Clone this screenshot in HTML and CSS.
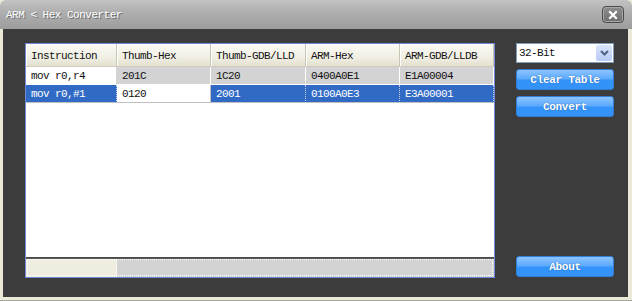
FILE: index.html
```html
<!DOCTYPE html>
<html lang="en">
<head>
    <meta charset="UTF-8">
    <title>ARM &lt; Hex Converter</title>
    <link rel="stylesheet" href="styles.css">
</head>
<body>
    <div class="window">
        <div class="titlebar">
            <span class="title">ARM &lt; Hex Converter</span>
            <button class="close-btn">
                <svg width="10" height="10" viewBox="0 0 10 10">
                    <path d="M2 2 L8 8 M8 2 L2 8" stroke="#fff" stroke-width="2.2" stroke-linecap="square"/>
                </svg>
            </button>
        </div>

        <div class="client">
            <div class="grid">
                <div class="grid-body">
                    <div class="row header-row">
                        <div class="cell">Instruction</div>
                        <div class="cell">Thumb-Hex</div>
                        <div class="cell">Thumb-GDB/LLD</div>
                        <div class="cell">ARM-Hex</div>
                        <div class="cell">ARM-GDB/LLDB</div>
                    </div>
                    <div class="row data-row">
                        <div class="cell focus">mov r0,r4</div>
                        <div class="cell">201C</div>
                        <div class="cell">1C20</div>
                        <div class="cell">0400A0E1</div>
                        <div class="cell">E1A00004</div>
                    </div>
                    <div class="row data-row selected">
                        <div class="cell">mov r0,#1</div>
                        <div class="cell editing">0120</div>
                        <div class="cell">2001</div>
                        <div class="cell">0100A0E3</div>
                        <div class="cell">E3A00001</div>
                    </div>
                </div>
                <div class="hscroll">
                    <div class="hscroll-thumb"></div>
                    <div class="hscroll-track"></div>
                </div>
            </div>

            <div class="side">
                <div class="combo">
                    <span class="combo-text">32-Bit</span>
                    <span class="combo-arrow">
                        <svg width="9" height="6" viewBox="0 0 9 6">
                            <path d="M1 1 L4.5 4.5 L8 1" fill="none" stroke="#4d6185" stroke-width="2"/>
                        </svg>
                    </span>
                </div>
                <button class="btn">Clear Table</button>
                <button class="btn">Convert</button>
                <button class="btn about">About</button>
            </div>
        </div>
    </div>
</body>
</html>
```

FILE: styles.css
```css
body {
    margin: 0;
    background: #ece9d8;
    font-family: 'Liberation Mono', monospace;
}

.window {
    width: 632px;
    height: 301px;
    display: flex;
    flex-direction: column;
    background: #ece9d8;
    border-bottom: 1px solid #a7a69c;
    box-sizing: border-box;
}

.titlebar {
    height: 29px;
    flex-shrink: 0;
    display: flex;
    align-items: center;
    justify-content: space-between;
    padding: 0 8px 0 6px;
    background: linear-gradient(#c3c3c3 0%, #afafaf 40%, #9d9d9d 100%);
    border-radius: 6px 6px 0 0;
}

.title {
    color: #fff;
    font-size: 11px;
    letter-spacing: -0.5px;
    text-shadow: 1px 1px 0 #6b6b6b;
    margin-top: 1px;
}

.close-btn {
    width: 22px;
    height: 17px;
    padding: 0;
    display: flex;
    align-items: center;
    justify-content: center;
    border: 1px solid #4a4a4a;
    border-radius: 4px;
    background: linear-gradient(#8e8e8e, #6d6d6d);
    box-shadow: inset 0 0 0 1px #a9a9a9;
}

.client {
    flex: 1;
    margin: 0 4px 3px 3px;
    background: #3c3c3c;
    display: flex;
    padding: 14px 0 0 22px;
    gap: 21px;
}

.grid {
    width: 470px;
    height: 235px;
    box-sizing: border-box;
    border: 1px solid #6f88d8;
    background: #fff;
    display: flex;
    flex-direction: column;
}

.grid-body {
    flex: 1;
    border-bottom: 1px solid #4a4a4a;
}

.row {
    display: grid;
    grid-template-columns: 91px 94px 95px 94px 94px;
}

.cell {
    font-size: 11px;
    letter-spacing: -0.6px;
    padding: 0 5px;
    white-space: nowrap;
    overflow: hidden;
}

.header-row .cell {
    height: 23px;
    line-height: 24px;
    color: #111;
    background: linear-gradient(#fbfaf5 0%, #f1efe4 60%, #e3e0cf 100%);
    border-right: 1px solid #c8c5b4;
    border-bottom: 1px solid #d0cdbd;
    box-shadow: inset 1px 0 0 #fff;
    box-sizing: border-box;
}

.data-row .cell {
    height: 18px;
    line-height: 18px;
    background: #d3d3d3;
    border-right: 1px solid #fff;
    border-bottom: 1px solid #fff;
    box-sizing: border-box;
    color: #111;
}

.data-row .cell.focus {
    background: #fff;
    border-right-color: #d3d3d3;
}

.selected .cell {
    background: #316ac5;
    color: #fff;
    border-right: 1px dotted #c5d3ee;
    border-bottom-color: #c0c0c0;
}

.selected .cell.editing {
    background: #fff;
    color: #111;
    border-right: 1px solid #c0c0c0;
}

.hscroll {
    height: 18px;
    display: flex;
    border-top: 1px solid #5a5a5a;
    outline: 1px dotted #fff;
    outline-offset: -2px;
}

.hscroll-thumb {
    width: 90px;
    background: #efede0;
    border-right: 1px dotted #fff;
}

.hscroll-track {
    flex: 1;
    background: #d3d3d3;
}

.side {
    width: 98px;
    display: flex;
    flex-direction: column;
}

.combo {
    height: 20px;
    box-sizing: border-box;
    border: 1px solid #7f9db9;
    background: #fff;
    display: flex;
    align-items: center;
    justify-content: space-between;
    padding-left: 2px;
    font-size: 11px;
    letter-spacing: -0.6px;
    color: #111;
}

.combo-arrow {
    width: 16px;
    height: 16px;
    margin-right: 1px;
    display: flex;
    align-items: center;
    justify-content: center;
    background: linear-gradient(#dbe5fb, #b7caf5);
    border-radius: 2px;
}

.btn {
    height: 21px;
    margin-top: 6px;
    padding: 0;
    border: 1px solid #2f7fd7;
    border-radius: 3px;
    background: linear-gradient(#8cc4ff 0%, #5eaafd 45%, #3293f9 55%, #3592f7 100%);
    color: #fff;
    font-family: 'Liberation Mono', monospace;
    font-size: 11px;
    font-weight: bold;
    letter-spacing: -0.3px;
    text-shadow: 0 0 1px #1b4f96;
}

.btn.about {
    margin-top: auto;
    margin-bottom: 20px;
}
```
